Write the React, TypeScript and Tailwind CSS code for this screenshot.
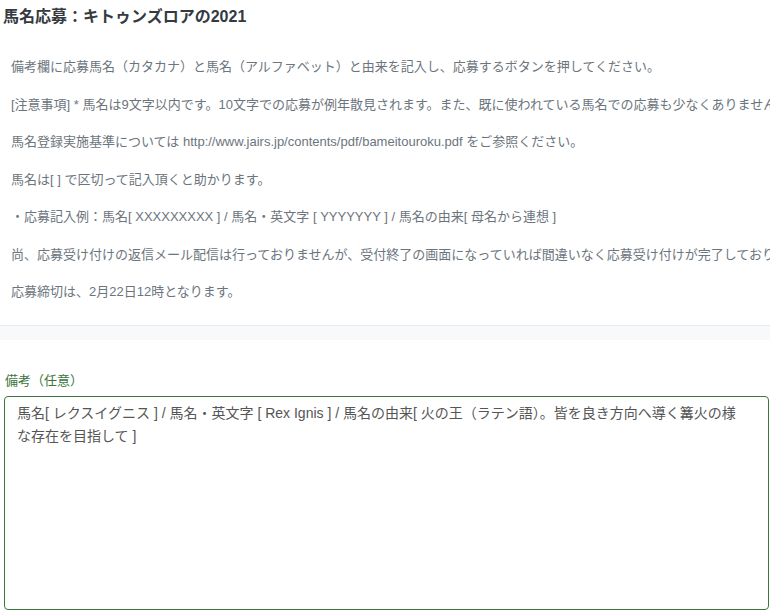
import React from 'react'

const FONT = '"Liberation Sans", Arial, "Noto Sans CJK JP", sans-serif'

const NOTES = [
  '備考欄に応募馬名（カタカナ）と馬名（アルファベット）と由来を記入し、応募するボタンを押してください。',
  '[注意事項] * 馬名は9文字以内です。10文字での応募が例年散見されます。また、既に使われている馬名での応募も少なくありません。',
  '馬名登録実施基準については http://www.jairs.jp/contents/pdf/bameitouroku.pdf をご参照ください。',
  '馬名は[ ] で区切って記入頂くと助かります。',
  '・応募記入例：馬名[ XXXXXXXXX ] / 馬名・英文字 [ YYYYYYY ] / 馬名の由来[ 母名から連想 ]',
  '尚、応募受け付けの返信メール配信は行っておりませんが、受付終了の画面になっていれば間違いなく応募受け付けが完了しております。',
  '応募締切は、2月22日12時となります。',
]

export default function App() {
  return (
    <div className="w-[770px] h-[612px] overflow-hidden bg-white" style={{ fontFamily: FONT }}>
      {/* title */}
      <h1 className="pt-[5px] pl-[3px] text-[16px] leading-[24px] font-bold text-[#343a40] whitespace-nowrap">
        馬名応募：キトゥンズロアの2021
      </h1>

      {/* notes (they run past the right edge, as on the page) */}
      <div className="mt-[28px] pl-[11px] h-[268px]">
        {NOTES.map((line, i) => (
          <p key={i} className="text-[13px] leading-[19.5px] mb-[18px] text-[#6c757d] whitespace-nowrap overflow-hidden">
            {line}
          </p>
        ))}
      </div>

      {/* divider band */}
      <div className="border-t border-[#e9ecef] bg-[#f8f9fa] h-[15px]" />

      {/* form field */}
      <div className="mt-[31px] px-[4px]">
        <label className="block pl-[1px] text-[13px] leading-[19.5px] text-[#3c763d]">備考（任意）</label>
        <textarea
          readOnly
          className="mt-[5px] block w-[765px] h-[214px] resize-none rounded-[4px] border border-[#3c763d] pl-[12px] pr-[20px] py-[5px] text-[14px] leading-[23px] text-[#555555] outline-none"
          style={{ fontFamily: FONT }}
          defaultValue="馬名[ レクスイグニス ] / 馬名・英文字 [ Rex Ignis ] / 馬名の由来[ 火の王（ラテン語）。皆を良き方向へ導く篝火の様な存在を目指して ]"
        />
      </div>
    </div>
  )
}
